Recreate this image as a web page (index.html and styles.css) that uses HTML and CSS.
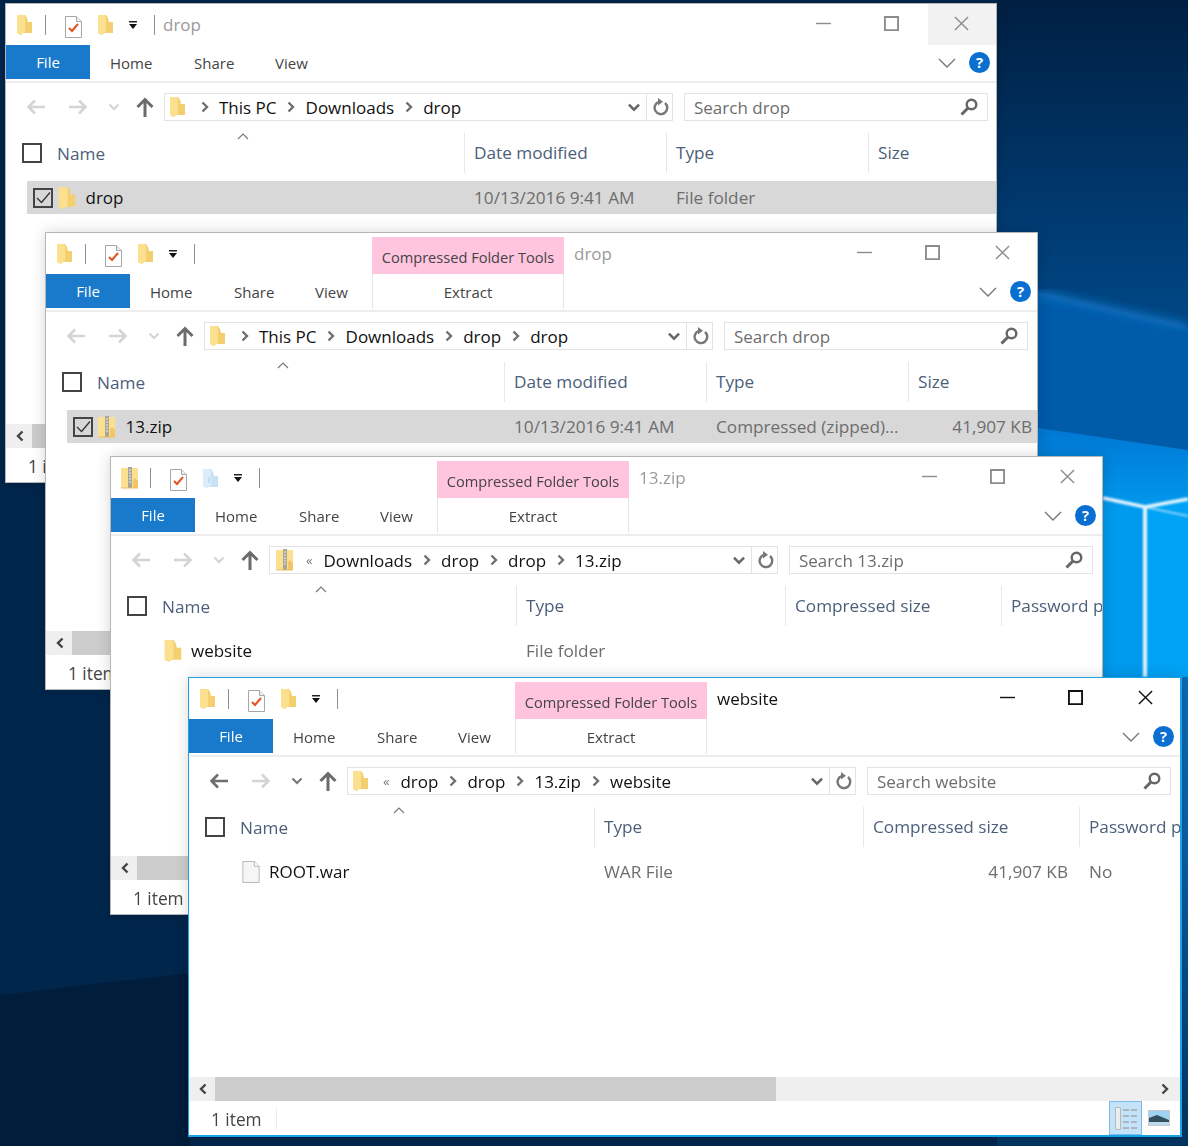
FILE: index.html
```html
<!DOCTYPE html>
<html lang="en">

<head>
    <meta charset="UTF-8">
    <meta name="viewport" content="width=device-width, initial-scale=1.0">
    <title>File Explorer windows</title>
    <link rel="stylesheet" href="styles.css">
</head>

<body>
    <svg class="icon-defs" width="0" height="0">
        <symbol id="i-folder" viewBox="0 0 15 20">
            <path d="M0 1q0-1 1-1h7l2 3 1 4h4v11H4v2l-4-2z" fill="#f3cf70" />
            <path d="M0 1q0-1 1-1h6l1 2v15l-4 3-4-2z" fill="#fbe08f" />
        </symbol>
        <symbol id="i-folder-blue" viewBox="0 0 15 20">
            <path d="M0 1h8l2 3 1 4h4v11H4v1l-4-2z" fill="#c6e2f5" />
            <path d="M0 1h7l1 2v14l-4 3-4-2z" fill="#dcedf9" />
            <path d="M6 9v6" stroke="#a8cfe9" />
        </symbol>
        <symbol id="i-zip" viewBox="0 0 18 22">
            <path d="M0 1h17v20H0z" fill="#fbe08f" />
            <path d="M12 13l2-2 3 3v7h-5z" fill="#f3c565" />
            <path d="M7 0h4v21H7z" fill="#a9a69c" />
            <path d="M8 3h2M8 6h2M8 9h2M8 12h2M8 15h2" stroke="#eee" />
            <path d="M0 21h17" stroke="#eebb5c" />
        </symbol>
        <symbol id="i-check-doc" viewBox="0 0 17 22">
            <path d="M.5.5h11l5 5v16H.5z" fill="#fff" stroke="#a8a8a8" />
            <path d="M11.5.5v5h5" fill="#eee" stroke="#a8a8a8" />
            <path d="M4 12l3 3 6-7" fill="none" stroke="#e2521c" stroke-width="2" />
        </symbol>
        <symbol id="i-file" viewBox="0 0 18 23">
            <path d="M.5.5h12l5 5v17H.5z" fill="#f6f6f6" stroke="#b4b4b4" />
            <path d="M12.5.5v5h5" fill="#fff" stroke="#b4b4b4" />
        </symbol>
        <symbol id="i-qat-drop" viewBox="0 0 10 8">
            <path d="M1 0h8v1.500H1z" fill="#222" />
            <path d="M1 3h8L5 8z" fill="#111" />
        </symbol>
        <symbol id="i-left" viewBox="0 0 20 16">
            <path d="M19 8H3M9 1.500L2.500 8 9 14.500" fill="none" stroke="currentColor" stroke-width="2.600" />
        </symbol>
        <symbol id="i-right" viewBox="0 0 20 16">
            <path d="M1 8h16M11 1.500L17.500 8 11 14.500" fill="none" stroke="currentColor" stroke-width="2.600" />
        </symbol>
        <symbol id="i-up" viewBox="0 0 18 20">
            <path d="M9 20V3M1.500 10L9 2.500 16.500 10" fill="none" stroke="currentColor" stroke-width="3" />
        </symbol>
        <symbol id="i-down-small" viewBox="0 0 12 8">
            <path d="M1.500 1.500L6 6l4.500-4.500" fill="none" stroke="currentColor" stroke-width="2.200" />
        </symbol>
        <symbol id="i-crumb" viewBox="0 0 8 12">
            <path d="M1.500 1.500L6 6l-4.500 4.500" fill="none" stroke="currentColor" stroke-width="2.400" />
        </symbol>
        <symbol id="i-crumb-left" viewBox="0 0 8 12">
            <path d="M6.500 1.500L2 6l4.500 4.500" fill="none" stroke="currentColor" stroke-width="2.400" />
        </symbol>
        <symbol id="i-refresh" viewBox="0 0 16 18">
            <path d="M12 5a6.300 6.300 0 1 1-6-1.200" fill="none" stroke="currentColor" stroke-width="2.400" />
            <path d="M5 0l5 3.800-5 3.700z" fill="currentColor" />
        </symbol>
        <symbol id="i-search" viewBox="0 0 18 18">
            <circle cx="11.500" cy="6.500" r="4.800" fill="none" stroke="currentColor" stroke-width="2.400" />
            <path d="M8 10l-6.500 6.500" fill="none" stroke="currentColor" stroke-width="3" />
        </symbol>
        <symbol id="i-chevron" viewBox="0 0 18 10">
            <path d="M1 1l8 8 8-8" fill="none" stroke="currentColor" stroke-width="1.400" />
        </symbol>
        <symbol id="i-caret" viewBox="0 0 12 7">
            <path d="M1 6l5-5 5 5" fill="none" stroke="currentColor" stroke-width="1.100" />
        </symbol>
        <symbol id="i-tick" viewBox="0 0 15 13">
            <path d="M1 7l4.500 4.500L14 1.500" fill="none" stroke="currentColor" stroke-width="1.300" />
        </symbol>
        <symbol id="i-min" viewBox="0 0 16 16">
            <path d="M0 8h16" stroke="currentColor" stroke-width="1.500" />
        </symbol>
        <symbol id="i-max" viewBox="0 0 16 16">
            <path d="M1 1h14v14H1z" fill="none" stroke="currentColor" stroke-width="2" />
        </symbol>
        <symbol id="i-close" viewBox="0 0 16 16">
            <path d="M1 1l14 14M15 1L1 15" fill="none" stroke="currentColor" stroke-width="1.500" />
        </symbol>
    </svg>

    <svg class="wallpaper" viewBox="0 0 1188 1146" preserveAspectRatio="none">
        <defs>
            <linearGradient id="wall-right" x1="0" y1="0" x2="0" y2="1">
                <stop offset="0" stop-color="#001f42" />
                <stop offset="0.25" stop-color="#00437f" />
                <stop offset="0.59" stop-color="#0a6cb8" />
                <stop offset="0.74" stop-color="#0a5fa8" />
                <stop offset="1" stop-color="#013560" />
            </linearGradient>
            <linearGradient id="wall-glow" gradientUnits="userSpaceOnUse" x1="0" y1="430" x2="0" y2="510">
                <stop offset="0" stop-color="#0078d4" />
                <stop offset="1" stop-color="#009aee" />
            </linearGradient>
            <filter id="wall-blur">
                <feGaussianBlur stdDeviation="1.200" />
            </filter>
            <filter id="wall-blur-wide">
                <feGaussianBlur stdDeviation="4" />
            </filter>
        </defs>
        <rect width="1188" height="1146" fill="#00264c" />
        <path d="M0 995l190-22v173H0z" fill="#001d3c" />
        <rect x="997" width="191" height="1146" fill="url(#wall-right)" />
        <path d="M997 282l191 44v124l-191-28z" fill="#005ba9" />
        <path d="M1037 293l151 34" fill="none" stroke="#0a6cba" stroke-width="8" filter="url(#wall-blur-wide)" />
        <path d="M997 422l191 28v227H997z" fill="url(#wall-glow)" />
        <path d="M1145 507l43-8v178h-43z" fill="#00a2f5" />
        <g fill="none" stroke="#e4f6ff" filter="url(#wall-blur)">
            <path d="M1103 498l42 9 43-8" stroke-width="3.500" />
            <path d="M1145 507l43 9" stroke-width="2" opacity="0.6" />
            <path d="M1145 507v170" stroke-width="4" />
        </g>
    </svg>

    <!-- first window: drop -->
    <div class="win win-1">
        <div class="titlebar">
            <svg class="qat-icon"><use href="#i-folder" /></svg>
            <span class="qat-sep"></span>
            <svg class="qat-doc"><use href="#i-check-doc" /></svg>
            <svg class="qat-icon"><use href="#i-folder" /></svg>
            <svg class="qat-drop"><use href="#i-qat-drop" /></svg>
            <span class="qat-sep qat-sep-end"></span>
            <span class="win-title">drop</span>
            <div class="win-btns">
                <span class="win-btn"><svg><use href="#i-min" /></svg></span>
                <span class="win-btn"><svg><use href="#i-max" /></svg></span>
                <span class="win-btn win-btn-hover"><svg><use href="#i-close" /></svg></span>
            </div>
        </div>
        <div class="ribbon">
            <span class="tab-file">File</span>
            <span class="tab">Home</span>
            <span class="tab">Share</span>
            <span class="tab">View</span>
            <svg class="ribbon-chevron"><use href="#i-chevron" /></svg>
            <span class="help">?</span>
        </div>
        <div class="nav">
            <svg class="nav-arrow nav-off"><use href="#i-left" /></svg>
            <svg class="nav-arrow nav-off"><use href="#i-right" /></svg>
            <svg class="nav-down nav-off"><use href="#i-down-small" /></svg>
            <svg class="nav-up"><use href="#i-up" /></svg>
            <div class="address">
                <svg class="addr-icon"><use href="#i-folder" /></svg>
                <svg class="crumb crumb-first"><use href="#i-crumb" /></svg>
                <span>This PC</span>
                <svg class="crumb"><use href="#i-crumb" /></svg>
                <span>Downloads</span>
                <svg class="crumb"><use href="#i-crumb" /></svg>
                <span>drop</span>
                <svg class="addr-down"><use href="#i-down-small" /></svg>
                <span class="addr-refresh"><svg><use href="#i-refresh" /></svg></span>
            </div>
            <div class="search">
                <span>Search drop</span>
                <svg><use href="#i-search" /></svg>
            </div>
        </div>
        <div class="head cols-date">
            <div class="head-name"><span class="check"></span>Name<svg class="sort-caret"><use href="#i-caret" /></svg></div>
            <div class="head-cell">Date modified</div>
            <div class="head-cell">Type</div>
            <div class="head-cell">Size</div>
        </div>
        <div class="list">
            <div class="row row-on cols-date">
                <div class="row-name"><span class="check check-on"><svg><use href="#i-tick" /></svg></span><svg class="row-icon"><use href="#i-folder" /></svg>drop</div>
                <div class="row-cell">10/13/2016 9:41 AM</div>
                <div class="row-cell">File folder</div>
                <div class="row-cell"></div>
            </div>
        </div>
        <div class="hscroll">
            <span class="hscroll-btn"><svg><use href="#i-crumb-left" /></svg></span>
            <span class="hscroll-thumb"></span>
            <span class="hscroll-btn hscroll-end"><svg><use href="#i-crumb" /></svg></span>
        </div>
        <div class="status"><span class="status-text">1 item</span></div>
    </div>

    <!-- second window: drop\drop -->
    <div class="win win-2">
        <div class="titlebar">
            <svg class="qat-icon"><use href="#i-folder" /></svg>
            <span class="qat-sep"></span>
            <svg class="qat-doc"><use href="#i-check-doc" /></svg>
            <svg class="qat-icon"><use href="#i-folder" /></svg>
            <svg class="qat-drop"><use href="#i-qat-drop" /></svg>
            <span class="qat-sep qat-sep-end"></span>
            <span class="tools-label">Compressed Folder Tools</span>
            <span class="win-title">drop</span>
            <div class="win-btns">
                <span class="win-btn"><svg><use href="#i-min" /></svg></span>
                <span class="win-btn"><svg><use href="#i-max" /></svg></span>
                <span class="win-btn"><svg><use href="#i-close" /></svg></span>
            </div>
        </div>
        <div class="ribbon">
            <span class="tab-file">File</span>
            <span class="tab">Home</span>
            <span class="tab">Share</span>
            <span class="tab">View</span>
            <span class="tab-tools">Extract</span>
            <svg class="ribbon-chevron"><use href="#i-chevron" /></svg>
            <span class="help">?</span>
        </div>
        <div class="nav">
            <svg class="nav-arrow nav-off"><use href="#i-left" /></svg>
            <svg class="nav-arrow nav-off"><use href="#i-right" /></svg>
            <svg class="nav-down nav-off"><use href="#i-down-small" /></svg>
            <svg class="nav-up"><use href="#i-up" /></svg>
            <div class="address">
                <svg class="addr-icon"><use href="#i-folder" /></svg>
                <svg class="crumb crumb-first"><use href="#i-crumb" /></svg>
                <span>This PC</span>
                <svg class="crumb"><use href="#i-crumb" /></svg>
                <span>Downloads</span>
                <svg class="crumb"><use href="#i-crumb" /></svg>
                <span>drop</span>
                <svg class="crumb"><use href="#i-crumb" /></svg>
                <span>drop</span>
                <svg class="addr-down"><use href="#i-down-small" /></svg>
                <span class="addr-refresh"><svg><use href="#i-refresh" /></svg></span>
            </div>
            <div class="search">
                <span>Search drop</span>
                <svg><use href="#i-search" /></svg>
            </div>
        </div>
        <div class="head cols-date">
            <div class="head-name"><span class="check"></span>Name<svg class="sort-caret"><use href="#i-caret" /></svg></div>
            <div class="head-cell">Date modified</div>
            <div class="head-cell">Type</div>
            <div class="head-cell">Size</div>
        </div>
        <div class="list">
            <div class="row row-on cols-date">
                <div class="row-name"><span class="check check-on"><svg><use href="#i-tick" /></svg></span><svg class="row-icon"><use href="#i-zip" /></svg>13.zip</div>
                <div class="row-cell">10/13/2016 9:41 AM</div>
                <div class="row-cell">Compressed (zipped)...</div>
                <div class="row-cell row-num">41,907 KB</div>
            </div>
        </div>
        <div class="hscroll">
            <span class="hscroll-btn"><svg><use href="#i-crumb-left" /></svg></span>
            <span class="hscroll-thumb"></span>
            <span class="hscroll-btn hscroll-end"><svg><use href="#i-crumb" /></svg></span>
        </div>
        <div class="status"><span class="status-text">1 item</span></div>
    </div>

    <!-- third window: 13.zip -->
    <div class="win win-3">
        <div class="titlebar">
            <svg class="qat-zip"><use href="#i-zip" /></svg>
            <span class="qat-sep"></span>
            <svg class="qat-doc"><use href="#i-check-doc" /></svg>
            <svg class="qat-icon"><use href="#i-folder-blue" /></svg>
            <svg class="qat-drop"><use href="#i-qat-drop" /></svg>
            <span class="qat-sep qat-sep-end"></span>
            <span class="tools-label">Compressed Folder Tools</span>
            <span class="win-title">13.zip</span>
            <div class="win-btns">
                <span class="win-btn"><svg><use href="#i-min" /></svg></span>
                <span class="win-btn"><svg><use href="#i-max" /></svg></span>
                <span class="win-btn"><svg><use href="#i-close" /></svg></span>
            </div>
        </div>
        <div class="ribbon">
            <span class="tab-file">File</span>
            <span class="tab">Home</span>
            <span class="tab">Share</span>
            <span class="tab">View</span>
            <span class="tab-tools">Extract</span>
            <svg class="ribbon-chevron"><use href="#i-chevron" /></svg>
            <span class="help">?</span>
        </div>
        <div class="nav">
            <svg class="nav-arrow nav-off"><use href="#i-left" /></svg>
            <svg class="nav-arrow nav-off"><use href="#i-right" /></svg>
            <svg class="nav-down nav-off"><use href="#i-down-small" /></svg>
            <svg class="nav-up"><use href="#i-up" /></svg>
            <div class="address">
                <svg class="addr-zip"><use href="#i-zip" /></svg>
                <span class="crumb-more">«</span>
                <span>Downloads</span>
                <svg class="crumb"><use href="#i-crumb" /></svg>
                <span>drop</span>
                <svg class="crumb"><use href="#i-crumb" /></svg>
                <span>drop</span>
                <svg class="crumb"><use href="#i-crumb" /></svg>
                <span>13.zip</span>
                <svg class="addr-down"><use href="#i-down-small" /></svg>
                <span class="addr-refresh"><svg><use href="#i-refresh" /></svg></span>
            </div>
            <div class="search">
                <span>Search 13.zip</span>
                <svg><use href="#i-search" /></svg>
            </div>
        </div>
        <div class="head cols-zip">
            <div class="head-name"><span class="check"></span>Name<svg class="sort-caret"><use href="#i-caret" /></svg></div>
            <div class="head-cell">Type</div>
            <div class="head-cell">Compressed size</div>
            <div class="head-cell">Password pr</div>
        </div>
        <div class="list">
            <div class="row cols-zip">
                <div class="row-name row-plain"><svg class="row-icon"><use href="#i-folder" /></svg>website</div>
                <div class="row-cell">File folder</div>
                <div class="row-cell"></div>
                <div class="row-cell"></div>
            </div>
        </div>
        <div class="hscroll">
            <span class="hscroll-btn"><svg><use href="#i-crumb-left" /></svg></span>
            <span class="hscroll-thumb"></span>
            <span class="hscroll-btn hscroll-end"><svg><use href="#i-crumb" /></svg></span>
        </div>
        <div class="status"><span class="status-text">1 item</span></div>
    </div>

    <!-- front window: website -->
    <div class="win win-4 win-active">
        <div class="titlebar">
            <svg class="qat-icon"><use href="#i-folder" /></svg>
            <span class="qat-sep"></span>
            <svg class="qat-doc"><use href="#i-check-doc" /></svg>
            <svg class="qat-icon"><use href="#i-folder" /></svg>
            <svg class="qat-drop"><use href="#i-qat-drop" /></svg>
            <span class="qat-sep qat-sep-end"></span>
            <span class="tools-label">Compressed Folder Tools</span>
            <span class="win-title">website</span>
            <div class="win-btns">
                <span class="win-btn"><svg><use href="#i-min" /></svg></span>
                <span class="win-btn"><svg><use href="#i-max" /></svg></span>
                <span class="win-btn"><svg><use href="#i-close" /></svg></span>
            </div>
        </div>
        <div class="ribbon">
            <span class="tab-file">File</span>
            <span class="tab">Home</span>
            <span class="tab">Share</span>
            <span class="tab">View</span>
            <span class="tab-tools">Extract</span>
            <svg class="ribbon-chevron"><use href="#i-chevron" /></svg>
            <span class="help">?</span>
        </div>
        <div class="nav">
            <svg class="nav-arrow"><use href="#i-left" /></svg>
            <svg class="nav-arrow nav-off"><use href="#i-right" /></svg>
            <svg class="nav-down"><use href="#i-down-small" /></svg>
            <svg class="nav-up"><use href="#i-up" /></svg>
            <div class="address">
                <svg class="addr-icon"><use href="#i-folder" /></svg>
                <span class="crumb-more crumb-more-far">«</span>
                <span>drop</span>
                <svg class="crumb"><use href="#i-crumb" /></svg>
                <span>drop</span>
                <svg class="crumb"><use href="#i-crumb" /></svg>
                <span>13.zip</span>
                <svg class="crumb"><use href="#i-crumb" /></svg>
                <span>website</span>
                <svg class="addr-down"><use href="#i-down-small" /></svg>
                <span class="addr-refresh"><svg><use href="#i-refresh" /></svg></span>
            </div>
            <div class="search">
                <span>Search website</span>
                <svg><use href="#i-search" /></svg>
            </div>
        </div>
        <div class="head cols-zip">
            <div class="head-name"><span class="check"></span>Name<svg class="sort-caret"><use href="#i-caret" /></svg></div>
            <div class="head-cell">Type</div>
            <div class="head-cell">Compressed size</div>
            <div class="head-cell">Password pr</div>
        </div>
        <div class="list">
            <div class="row cols-zip">
                <div class="row-name row-plain"><svg class="row-icon"><use href="#i-file" /></svg>ROOT.war</div>
                <div class="row-cell">WAR File</div>
                <div class="row-cell row-num">41,907 KB</div>
                <div class="row-cell">No</div>
            </div>
        </div>
        <div class="hscroll">
            <span class="hscroll-btn"><svg><use href="#i-crumb-left" /></svg></span>
            <span class="hscroll-thumb"></span>
            <span class="hscroll-btn hscroll-end"><svg><use href="#i-crumb" /></svg></span>
        </div>
        <div class="status">
            <span class="status-text">1 item</span>
            <div class="view-btns">
                <span class="view-btn view-btn-on">
                    <svg width="24" height="28" viewBox="0 0 24 28">
                        <path d="M1.500 3.500h5v22h-5z" fill="#e8eef2" stroke="#b8b8b8" />
                        <path d="M4 14.500h.1" stroke="#e2521c" stroke-width="2" />
                        <path d="M9 6h6M17 6h6M9 12h6M17 12h6M9 18h6M17 18h6M9 24h6M17 24h6" stroke="#8a8a8a" />
                    </svg>
                </span>
                <span class="view-btn">
                    <svg width="22" height="16" viewBox="0 0 22 16">
                        <path d="M0 0h22v16H0z" fill="#c9c9c9" />
                        <path d="M1 1h20v8H1z" fill="#9fd3f2" />
                        <path d="M1 8l8-3 12 5v2H1z" fill="#34505f" />
                        <path d="M1 12h20v3H1z" fill="#b8d9ef" />
                    </svg>
                </span>
            </div>
        </div>
    </div>
</body>

</html>
```

FILE: styles.css
```css
body {
    margin: 0;
    width: 1188px;
    height: 1146px;
    position: relative;
    overflow: hidden;
    font-family: "Open Sans", sans-serif;
    font-size: 16.5px;
    color: #111;
    background-color: #00264c;
}

.icon-defs {
    position: absolute;
}

.wallpaper {
    position: absolute;
    left: 0;
    top: 0;
    width: 1188px;
    height: 1146px;
}

/* windows sit on the desktop, so these are free canvas positions */
.win {
    position: absolute;
    box-sizing: border-box;
    display: flex;
    flex-direction: column;
    overflow: hidden;
    background-color: #fff;
    border: 1px solid #b5b5b5;
    box-shadow: 0 0 14px rgba(0, 0, 0, 0.16);
}

.win-1 {
    left: 5px;
    top: 3px;
    width: 992px;
    height: 480px;
}

.win-2 {
    left: 45px;
    top: 232px;
    width: 993px;
    height: 458px;
}

.win-3 {
    left: 110px;
    top: 456px;
    width: 993px;
    height: 459px;
}

.win-4 {
    left: 188px;
    top: 677px;
    width: 994px;
    height: 460px;
}

.win-active {
    border-color: #1ba1e6;
    border-width: 1px 2px 2px 1px;
}

/* title bar */
.titlebar {
    display: flex;
    align-items: center;
    height: 41px;
    flex: none;
    padding-left: 11px;
}

.qat-icon {
    width: 15px;
    height: 20px;
    flex: none;
}

.qat-zip {
    width: 18px;
    height: 22px;
    flex: none;
    margin-left: -1px;
    margin-right: -2px;
}

.qat-doc {
    width: 17px;
    height: 22px;
    margin: 4px 16px 0 19px;
    flex: none;
}

.qat-drop {
    width: 10px;
    height: 8px;
    margin-left: 15px;
    flex: none;
}

.qat-sep {
    width: 1px;
    height: 20px;
    margin-left: 13px;
    background-color: #8f8f8f;
    flex: none;
}

.qat-sep-end {
    margin-left: 16px;
}

.win-title {
    margin-left: 8px;
    font-size: 17px;
    color: #9a9a9a;
}

.tools-label + .win-title {
    margin-left: 10px;
}

.win-active .win-title {
    color: #111;
}

.tools-label {
    align-self: flex-end;
    box-sizing: border-box;
    width: 192px;
    height: 37px;
    margin-left: 177px;
    line-height: 40px;
    text-align: center;
    font-size: 14.6px;
    color: #444;
    background-color: #ffc4de;
    white-space: nowrap;
}

.win-btns {
    display: flex;
    align-self: flex-start;
    margin-left: auto;
}

.win-btn {
    display: flex;
    align-items: center;
    justify-content: center;
    box-sizing: border-box;
    width: 68px;
    height: 41px;
    padding: 0 2px 3px 0;
    color: #8c8c8c;
}

.win-btn:not(:last-child) {
    padding-right: 5px;
}

.win-btn svg {
    width: 15px;
    height: 15px;
}

.win-btn-hover {
    background-color: #f2f2f2;
}

.win-active .win-btn {
    color: #111;
}

/* ribbon */
.ribbon {
    display: flex;
    align-items: center;
    flex: none;
    height: 35px;
    padding-bottom: 1px;
    border-bottom: 2px solid #ededed;
    font-size: 15px;
    color: #444;
}

.tab-file {
    align-self: flex-start;
    width: 84px;
    height: 34px;
    line-height: 35px;
    text-align: center;
    color: #fff;
    background-color: #1979ca;
    margin-right: 20px;
    flex: none;
}

.tab {
    padding-top: 1px;
    flex: none;
}

.tab:nth-child(2) {
    width: 84px;
}

.tab:nth-child(3) {
    width: 81px;
}

.tab:nth-child(4) {
    width: 57px;
}

.tab-tools {
    box-sizing: border-box;
    width: 192px;
    height: 35px;
    line-height: 36px;
    text-align: center;
    border-left: 1px solid #e6e6e6;
    border-right: 1px solid #e6e6e6;
    flex: none;
}

.ribbon-chevron {
    width: 18px;
    height: 10px;
    margin-left: auto;
    color: #777;
}

.help {
    width: 21px;
    height: 21px;
    margin: 0 6px 0 13px;
    border-radius: 50%;
    line-height: 21px;
    text-align: center;
    font-size: 15px;
    font-weight: 700;
    color: #fff;
    background-color: #0a6fd0;
}

/* back, forward, address and search */
.nav {
    display: flex;
    align-items: center;
    flex: none;
    height: 48px;
    margin-bottom: 2px;
    padding-left: 20px;
    color: #7f7f7f;
}

.nav-arrow {
    width: 20px;
    height: 16px;
    color: #6e6e6e;
    flex: none;
}

.nav-arrow + .nav-arrow {
    margin-left: 22px;
}

.nav-down {
    width: 12px;
    height: 8px;
    margin-left: 20px;
    margin-right: 16px;
    color: #7a7a7a;
    flex: none;
}

.nav-off {
    color: #d4d4d4;
}

.nav-up {
    width: 18px;
    height: 20px;
    margin-right: 10px;
    color: #6b6b6b;
    flex: none;
}

.address {
    display: flex;
    align-items: center;
    box-sizing: border-box;
    width: 509px;
    height: 28px;
    padding-left: 5px;
    border: 1px solid #e3e3e3;
    font-size: 17px;
    color: #111;
    flex: none;
}

.addr-icon {
    width: 15px;
    height: 20px;
    flex: none;
}

.addr-zip {
    width: 18px;
    height: 22px;
    margin-left: 1px;
    flex: none;
}

.crumb {
    width: 8px;
    height: 12px;
    margin: 0 10.5px;
    color: #6f6f6f;
    flex: none;
}

.crumb-first {
    margin-left: 16px;
    margin-right: 10px;
}

.crumb-more {
    margin: 0 11px 0 12px;
    font-size: 13px;
    color: #777;
}

.crumb-more-far {
    margin-left: 15px;
}

.addr-down {
    width: 14px;
    height: 9px;
    margin-left: auto;
    color: #666;
    flex: none;
}

.addr-refresh {
    display: flex;
    align-items: center;
    justify-content: center;
    box-sizing: border-box;
    width: 26px;
    height: 26px;
    margin-left: 5px;
    padding-left: 3px;
    border-left: 1px solid #e3e3e3;
    color: #777;
    flex: none;
}

.addr-refresh svg {
    width: 16px;
    height: 18px;
}

.search {
    display: flex;
    align-items: center;
    justify-content: space-between;
    box-sizing: border-box;
    width: 304px;
    height: 28px;
    margin-left: 11px;
    padding: 0 9px;
    border: 1px solid #e3e3e3;
    font-size: 17px;
    color: #6d6d6d;
    flex: none;
}

.search svg {
    width: 18px;
    height: 18px;
    color: #666;
}

/* details columns */
.cols-date {
    --c1: 458px;
    --c2: 202px;
    --c3: 202px;
}

.cols-zip {
    --c1: 405px;
    --c2: 269px;
    --c3: 216px;
}

.head {
    display: grid;
    grid-template-columns: var(--c1) var(--c2) var(--c3) 1fr;
    flex: none;
    height: 39px;
    font-size: 17.2px;
    color: #4c607a;
    white-space: nowrap;
}

.head-name {
    position: relative;
    display: flex;
    align-items: center;
    padding: 0 0 0 16px;
}

.head-cell {
    padding-left: 9px;
    line-height: 40px;
    border-left: 1px solid #e8e8e8;
}

.sort-caret {
    position: absolute;
    left: 231px;
    top: 0;
    width: 12px;
    height: 7px;
    color: #777;
}

.cols-zip .sort-caret {
    left: 204px;
}

.check {
    display: flex;
    align-items: center;
    justify-content: center;
    box-sizing: border-box;
    width: 20px;
    height: 20px;
    margin-right: 15px;
    border: 2px solid #444;
    flex: none;
    color: #333;
}

.check-on {
    margin-right: 5px;
}

.check svg {
    width: 15px;
    height: 13px;
}

.list {
    flex: 1;
    padding-top: 9px;
}

.row {
    display: grid;
    grid-template-columns: calc(var(--c1) - 21px) var(--c2) var(--c3) 1fr;
    align-items: center;
    height: 33px;
    margin-left: 21px;
    font-size: 17.2px;
    color: #6d6d6d;
    white-space: nowrap;
}

.row-on {
    background-color: #d8d8d8;
}

.row-name {
    display: flex;
    align-items: center;
    padding-left: 6px;
    font-size: 17px;
    color: #111;
}

.row-plain {
    padding-left: 31.5px;
}

.row-icon {
    width: 18px;
    height: 22px;
    margin-right: 9.5px;
    flex: none;
}

.row-cell {
    padding-left: 10px;
}

.row-num {
    padding-right: 5px;
    text-align: right;
}

.cols-zip .row-num {
    padding-right: 11px;
}

/* scrollbar and status bar */
.hscroll {
    display: flex;
    flex: none;
    height: 24px;
    background-color: #efefef;
}

.hscroll-btn {
    display: flex;
    align-items: center;
    justify-content: center;
    box-sizing: border-box;
    width: 26px;
    padding-left: 2px;
    color: #444;
    flex: none;
}

.hscroll-btn svg {
    width: 8px;
    height: 12px;
}

.hscroll-thumb {
    width: 561px;
    background-color: #cdcdcd;
}

.hscroll-end {
    margin-left: auto;
    padding: 0 4px 0 0;
}

.status {
    display: flex;
    align-items: center;
    justify-content: space-between;
    box-sizing: border-box;
    flex: none;
    height: 34px;
    padding: 3px 0 0 22px;
    font-size: 17.3px;
    color: #444;
}

.status-text {
    padding-right: 14px;
    border-right: 1px solid #ececec;
}

.view-btns {
    display: flex;
    align-items: center;
    margin-right: 5px;
    margin-top: -3px;
}

.view-btn {
    display: flex;
    align-items: center;
    justify-content: center;
    box-sizing: border-box;
    width: 33px;
    height: 34px;
}

.view-btn-on {
    background-color: #c5e3f8;
    border: 1px solid #7cbcec;
}
```
